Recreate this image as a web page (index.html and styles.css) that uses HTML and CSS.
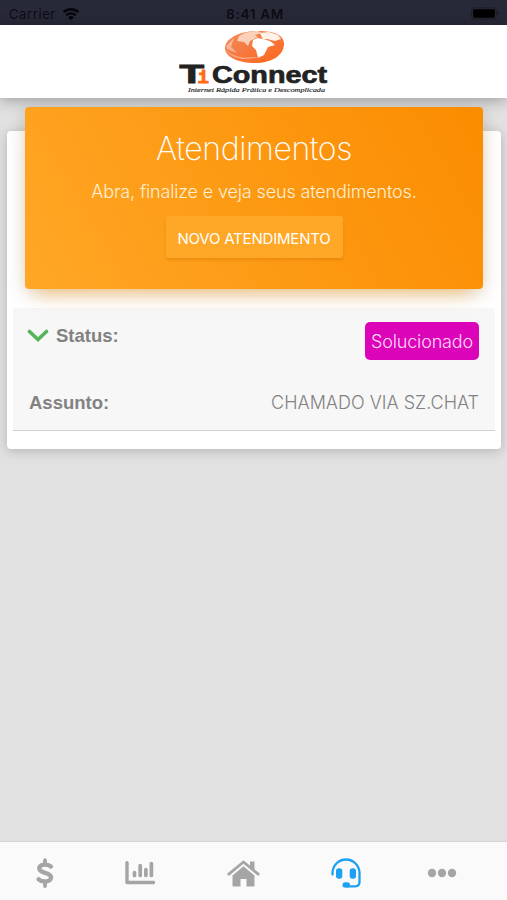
FILE: index.html
```html
<!DOCTYPE html>
<html lang="pt-BR">
<head>
  <meta charset="UTF-8">
  <meta name="viewport" content="width=device-width, initial-scale=1.0">
  <title>Atendimentos</title>
  <link rel="stylesheet" href="styles.css">
</head>
<body>
  <div class="status-bar">
    <div class="carrier">
      <span>Carrier</span>
      <svg class="wifi" viewBox="0 0 18 14" width="18" height="14">
        <path d="M1.5 5.2a11 11 0 0 1 15 0M4.2 8.2a7 7 0 0 1 9.6 0" fill="none" stroke="#06060c" stroke-width="2.3"/>
        <path d="M9 13.2 6.1 10.5a4.2 4.2 0 0 1 5.8 0z" fill="#06060c"/>
      </svg>
    </div>
    <span class="clock">8:41 AM</span>
    <svg class="battery" viewBox="0 0 30 13" width="30" height="13">
      <rect x=".5" y=".8" width="25" height="11.4" rx="3.2" fill="none" stroke="#1d1d29"/>
      <rect x="2" y="2.2" width="22" height="8.6" rx="1.8" fill="#000"/>
      <path d="M27 4.8q2 1.7 0 3.4z" fill="#171722"/>
    </svg>
  </div>

  <header class="header">
    <svg class="logo" viewBox="0 0 150 70" width="150" height="70">
      <defs>
        <linearGradient id="globe" x1="0" y1="0" x2="1" y2="1">
          <stop offset="0" stop-color="#f58a58"/>
          <stop offset=".45" stop-color="#f47a43"/>
          <stop offset="1" stop-color="#ff6416"/>
        </linearGradient>
      </defs>
      <path d="M46 21C45 12 58 3 80 3c15 0 25 4 25 13 0 11-12 19-29 19-17 0-29-6-30-14z" fill="url(#globe)"/>
      <path d="M60 8c5-3 12-5 19-5l4 2-7 2 3 2-8 4-2 5-4-4-7-1z" fill="#fbd0b8"/>
      <path d="M74 12l5-2 12 3 5 4-7 2-4 8-6 3-2-8-4-4z" fill="#fff"/>
      <path d="M81 5l9-1 9 3 3 4-6 2-8-2-4 1z" fill="#fff3e9"/>
      <path d="M46 21c9 9 21 10 36 7-14 6-31 3-36-7z" fill="#f9a37a"/>
      <path d="M47 18l8-8-3 9 6 6-10-4z" fill="#f8b698"/>
      <text class="logo-ti" x="0.500" y="55"><tspan textLength="24.500" lengthAdjust="spacingAndGlyphs">T</tspan><tspan class="logo-i" x="18.500">i</tspan></text>
      <text class="logo-name" x="33" y="55" textLength="115" lengthAdjust="spacingAndGlyphs">Connect</text>
      <text class="logo-tagline" x="9" y="63.500" textLength="137" lengthAdjust="spacingAndGlyphs">Internet Rápida Prática e Descomplicada</text>
    </svg>
  </header>

  <main class="content">
    <div class="card">
      <div class="card-header">
        <h1>Atendimentos</h1>
        <p>Abra, finalize e veja seus atendimentos.</p>
        <button class="btn-new">NOVO ATENDIMENTO</button>
      </div>
      <div class="ticket">
        <div class="ticket-row">
          <div class="ticket-label">
            <svg class="chevron" viewBox="0 0 22 14" width="22" height="14">
              <path d="M2.5 2.5 11 10.5 19.5 2.5" fill="none" stroke="#56b45b" stroke-width="3.6" stroke-linecap="round"/>
            </svg>
            <strong>Status:</strong>
          </div>
          <span class="badge">Solucionado</span>
        </div>
        <div class="ticket-row">
          <strong>Assunto:</strong>
          <span class="subject">CHAMADO VIA SZ.CHAT</span>
        </div>
      </div>
    </div>
  </main>

  <nav class="tabs">
    <a class="tab">
      <svg viewBox="0 0 18 30" width="18" height="30">
        <path d="M14.8 8.500C13 7.200 11 6.600 9 6.600 5.600 6.600 3.300 8 3.300 10.600c0 5.200 11.700 3.200 11.700 8.600 0 2.800-2.500 4.300-6 4.300-2.600 0-4.700-.7-6.300-2.200" fill="none" stroke="currentColor" stroke-width="4.400" stroke-linecap="round"/>
        <path d="M9 2.200V6M9 24v4" stroke="currentColor" stroke-width="3.800" stroke-linecap="round"/>
      </svg>
    </a>
    <a class="tab">
      <svg viewBox="0 0 30 24" width="30" height="24">
        <path d="M2 1.700v19.800h26.500" fill="none" stroke="currentColor" stroke-width="3.400" stroke-linecap="round" stroke-linejoin="round"/>
        <path d="M9.500 11.500v3M15.200 4.500v10M20.900 8.500v6M26.400 2.500v12" stroke="currentColor" stroke-width="3.700" stroke-linecap="round"/>
      </svg>
    </a>
    <a class="tab">
      <svg viewBox="0 0 33 27" width="33" height="27">
        <path d="M1.800 14.200 16.500 2l14.700 12.200" fill="none" stroke="currentColor" stroke-width="2.800" stroke-linecap="round" stroke-linejoin="round"/>
        <path d="M23 1.500h4.500v8.800L23 6.600z" fill="currentColor"/>
        <path d="M16.500 6.300 27.500 15.500v10q0 1-1 1h-7v-7.500h-6v7.500h-7q-1 0-1-1v-10z" fill="currentColor"/>
      </svg>
    </a>
    <a class="tab active">
      <svg viewBox="0 0 30 30" width="30" height="30">
        <path d="M1.500 16.500V15a13.500 13.500 0 0 1 27 0v9q0 4.300-4.300 4.300H15" fill="none" stroke="currentColor" stroke-width="2.300" stroke-linecap="round"/>
        <rect x="5" y="10.200" width="6.300" height="10.600" rx="2.800" fill="currentColor"/>
        <rect x="18.700" y="10.200" width="6.300" height="10.600" rx="2.800" fill="currentColor"/>
        <rect x="11.500" y="24.300" width="7.500" height="5.200" rx="2.600" fill="currentColor"/>
      </svg>
    </a>
    <a class="tab">
      <svg viewBox="0 0 30 10" width="30" height="10">
        <circle cx="5" cy="5" r="4.200" fill="currentColor"/>
        <circle cx="15" cy="5" r="4.200" fill="currentColor"/>
        <circle cx="25" cy="5" r="4.200" fill="currentColor"/>
      </svg>
    </a>
  </nav>
</body>
</html>
```
FILE: styles.css
```css
* {
  box-sizing: border-box;
}
body {
  margin: 0;
  height: 900px;
  display: flex;
  flex-direction: column;
  overflow: hidden;
  background-color: #e1e1e1;
  font-family: Inter, "Liberation Sans", sans-serif;
  font-weight: 300;
}
.status-bar {
  height: 25px;
  flex: none;
  display: grid;
  grid-template-columns: 1fr auto 1fr;
  align-items: center;
  padding: 2px 6px 0 9px;
  background-color: #282938;
  color: #0c0c14;
  font-size: 13px;
  font-weight: 400;
}
.carrier {
  display: flex;
  align-items: center;
  gap: 6px;
  letter-spacing: 0.6px;
}
.clock {
  font-size: 13.5px;
  font-weight: 600;
  letter-spacing: 0.7px;
}
.battery {
  justify-self: end;
}
.header {
  height: 73px;
  flex: none;
  display: flex;
  justify-content: center;
  padding-top: 3px;
  background-color: #fff;
  box-shadow: 0 2px 14px rgba(0,0,0,0.32);
}
.logo-ti {
  font-family: "Liberation Sans", sans-serif;
  font-size: 26px;
  font-weight: 700;
  fill: #222;
  stroke: #222;
  stroke-width: 1px;
}
.logo-i {
  font-family: "Liberation Mono", monospace;
  font-size: 19px;
  fill: #ff6a12;
  stroke: #ff6a12;
}
.logo-name {
  font-family: "Liberation Sans", sans-serif;
  font-size: 23px;
  font-weight: 700;
  fill: #222;
  stroke: #222;
  stroke-width: 0.7px;
}
.logo-tagline {
  font-family: "Liberation Serif", serif;
  font-size: 7px;
  font-style: italic;
  fill: #222;
  stroke: #222;
  stroke-width: 0.15px;
}
.content {
  flex: 1;
  padding: 33px 6px 0 7px;
}
.card {
  height: 318px;
  padding: 0 6px;
  background-color: #fff;
  border-radius: 4px;
  box-shadow: 0 2px 12px rgba(0,0,0,0.2);
}
.card-header {
  position: relative;
  top: -24px;
  height: 182px;
  margin: 0 12px -5px;
  padding-top: 22px;
  text-align: center;
  color: #fff;
  border-radius: 4px;
  background: linear-gradient(60deg, #ffa726, #fb8c00);
  box-shadow: 0 12px 20px -10px rgba(255,152,0,0.55), 0 4px 18px rgba(0,0,0,0.14);
}
.card-header h1 {
  margin: 0;
  font-size: 32px;
  line-height: 40px;
  font-weight: 200;
  letter-spacing: -0.4px;
}
.card-header p {
  margin: 12px 0 13px;
  font-size: 18px;
  line-height: 22px;
  letter-spacing: -0.15px;
  color: #fff0d6;
}
.btn-new {
  width: 177px;
  height: 42px;
  padding: 2px 0 0;
  border: none;
  border-radius: 3px;
  background-color: #ffa726;
  color: #fff;
  font-family: inherit;
  font-size: 15px;
  font-weight: 400;
  letter-spacing: -0.2px;
  box-shadow: 0 2px 3px rgba(200,110,0,0.35);
}
.ticket {
  height: 123px;
  padding: 14px 16px 0;
  background-color: #f7f7f7;
  border-bottom: 1px solid #d2d2d2;
}
.ticket-row {
  display: flex;
  justify-content: space-between;
  align-items: flex-start;
  height: 67px;
  color: #828282;
  font-size: 18px;
  line-height: 28px;
}
.ticket-row strong {
  font-family: "Liberation Sans", sans-serif;
  font-size: 18.5px;
  font-weight: 700;
}
.ticket-label {
  display: flex;
  align-items: center;
  gap: 7px;
  margin-left: -2px;
}
.badge {
  width: 114px;
  height: 38px;
  padding-top: 1px;
  border-radius: 5px;
  background-color: #dc04b9;
  color: #ffdcf8;
  line-height: 38px;
  text-align: center;
  letter-spacing: -0.15px;
}
.tabs {
  height: 59px;
  flex: none;
  display: grid;
  grid-template-columns: 90px 100px 106px 100px 92px;
  align-items: center;
  padding-top: 4px;
  background-color: #fafafa;
  border-top: 1px solid #d4d4d4;
}
.tab {
  display: flex;
  justify-content: center;
  color: #a5a5a5;
}
.tab.active {
  color: #1da1f2;
}
```
